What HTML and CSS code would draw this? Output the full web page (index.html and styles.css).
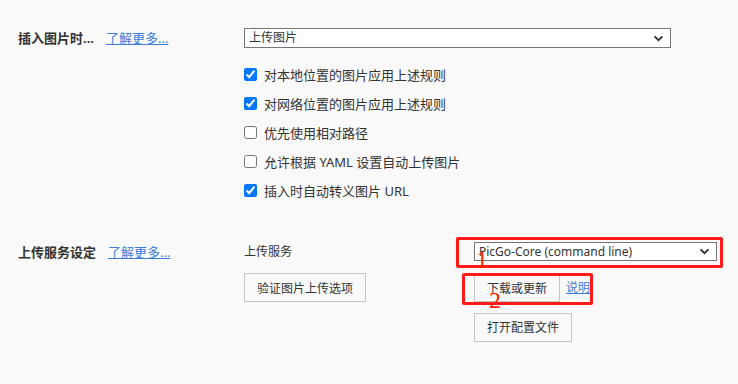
FILE: index.html
```html
<!DOCTYPE html>
<html>
<head>
    <title>图像设置</title>
    <link rel="stylesheet" href="styles.css">
</head>
<body>
    <div class="settings">
        <section class="setting">
            <div class="setting-label">
                <span class="title">插入图片时...</span>
                <a class="more" href="#">了解更多...</a>
            </div>
            <div class="setting-body">
                <select class="dropdown wide">
                    <option>上传图片</option>
                </select>
                <ul class="checklist">
                    <li><label><input type="checkbox" checked> 对本地位置的图片应用上述规则</label></li>
                    <li><label><input type="checkbox" checked> 对网络位置的图片应用上述规则</label></li>
                    <li><label><input type="checkbox"> 优先使用相对路径</label></li>
                    <li><label><input type="checkbox"> 允许根据 YAML 设置自动上传图片</label></li>
                    <li><label><input type="checkbox" checked> 插入时自动转义图片 URL</label></li>
                </ul>
            </div>
        </section>

        <section class="setting upload">
            <div class="setting-label">
                <span class="title">上传服务设定</span>
                <a class="more" href="#">了解更多...</a>
            </div>
            <div class="upload-grid">
                <span class="field-name">上传服务</span>
                <select class="dropdown">
                    <option>PicGo-Core (command line)</option>
                </select>

                <div><button class="btn">验证图片上传选项</button></div>
                <div class="btn-row">
                    <button class="btn">下载或更新</button>
                    <a class="more small" href="#">说明</a>
                </div>

                <div></div>
                <div class="btn-row last"><button class="btn">打开配置文件</button></div>

                <!-- 标注 -->
                <div class="mark mark-1"></div>
                <div class="mark mark-2"></div>
                <span class="mark-num num-1">1</span>
                <span class="mark-num num-2">2</span>
            </div>
        </section>
    </div>
</body>
</html>
```

FILE: styles.css
```css
body {
    margin: 0;
    background-color: #f9f9f9;
    color: #333;
    font-family: "Noto Sans", "Noto Sans CJK SC", sans-serif;
    font-size: 13px;
}

.settings {
    padding-top: 28px;
}

.setting {
    display: flex;
    align-items: flex-start;
}

.setting-label {
    width: 226px;
    padding-left: 18px;
    height: 20px;
    display: flex;
    align-items: center;
    gap: 12px;
    flex-shrink: 0;
}

.title {
    font-weight: bold;
    font-size: 13px;
    line-height: 20px;
}

.more {
    color: #3b7dd8;
    text-decoration: underline;
    font-size: 13px;
    line-height: 20px;
}

.more.small {
    font-size: 12px;
}

.setting-body {
    width: 427px;
}

.dropdown {
    appearance: none;
    display: block;
    width: 100%;
    height: 20px;
    margin: 0;
    padding: 0 24px 0 4px;
    border: 1px solid #767676;
    border-radius: 0;
    background-color: #fff;
    background-image: url("data:image/svg+xml;charset=UTF-8,%3csvg xmlns='http://www.w3.org/2000/svg' viewBox='0 0 12 8'%3e%3cpolyline points='1.5 1.5 6 6 10.5 1.5' fill='none' stroke='%23333' stroke-width='2.2'/%3e%3c/svg%3e");
    background-repeat: no-repeat;
    background-position: right 6px center;
    background-size: 11px 7px;
    color: #333;
    font-family: inherit;
    font-size: 12px;
    line-height: 18px;
}

.checklist {
    list-style: none;
    margin: 12px 0 0;
    padding: 0;
}

.checklist li {
    height: 29px;
    display: flex;
    align-items: center;
}

.checklist label {
    display: flex;
    align-items: center;
    gap: 7px;
    line-height: 20px;
}

.checklist input {
    margin: 0;
    width: 13px;
    height: 13px;
}

.upload {
    margin-top: 37px;
}

.upload-grid {
    position: relative;
    display: grid;
    grid-template-columns: 230px 243px;
    grid-template-rows: 19px 29px 29px;
    row-gap: 12px;
}

.field-name {
    font-size: 12px;
    line-height: 19px;
}

.upload-grid .dropdown {
    height: 19px;
}

.btn-row {
    display: flex;
    align-items: center;
    gap: 6px;
}

.btn-row.last {
    margin-top: -3px;
}

.btn {
    height: 29px;
    padding: 0 12px;
    margin: 0;
    border: 1px solid #c4c4c4;
    background-color: #f9f9f9;
    color: #333;
    font-family: inherit;
    font-size: 12px;
}

.mark {
    position: absolute;
    border: 3px solid #ff1a1a;
    border-radius: 2px;
}

.mark-1 {
    left: 212px;
    top: -5px;
    width: 261px;
    height: 25px;
}

.mark-2 {
    left: 218px;
    top: 31px;
    width: 125px;
    height: 26px;
}

.mark-num {
    position: absolute;
    color: #ff2200;
    font-family: "Liberation Serif", serif;
    font-size: 24px;
    line-height: 1;
}

.num-1 {
    left: 232px;
    top: 5px;
}

.num-2 {
    left: 245px;
    top: 46px;
}
```
